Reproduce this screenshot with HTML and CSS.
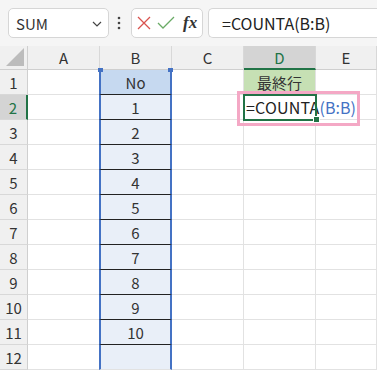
FILE: index.html
```html
<!DOCTYPE html>
<html lang="ja">
  <head>
    <meta charset="UTF-8" />
    <title>COUNTA</title>
    <link rel="stylesheet" href="styles.css">
  </head>
  <body>
    <div class="toolbar">
      <div class="namebox">
        <span>SUM</span>
        <svg class="chev" width="10" height="6" viewBox="0 0 10 6"><polyline points="1,1 5,5 9,1" fill="none" stroke="#444" stroke-width="1.2"/></svg>
      </div>
      <svg class="grip" width="4" height="14" viewBox="0 0 4 14"><circle cx="2" cy="2" r="1.3" fill="#444"/><circle cx="2" cy="7" r="1.3" fill="#444"/><circle cx="2" cy="12" r="1.3" fill="#444"/></svg>
      <div class="fxbox">
        <svg width="14" height="14" viewBox="0 0 14 14"><path d="M1 1 L13 13 M13 1 L1 13" stroke="#d9534f" stroke-width="1.3"/></svg>
        <svg width="18" height="14" viewBox="0 0 18 14"><polyline points="1,7 6,12 17,1" fill="none" stroke="#6aab66" stroke-width="1.3"/></svg>
        <span class="fx">fx</span>
      </div>
      <div class="formula">=COUNTA(B:B)</div>
    </div>

    <div class="sheet">
      <div class="corner"><span class="tri"></span></div>
      <div class="colhead">A</div>
      <div class="colhead">B</div>
      <div class="colhead">C</div>
      <div class="colhead sel">D</div>
      <div class="colhead">E</div>

      <div class="rowhead">1</div>
      <div class="cell"></div>
      <div class="cell b title">No<i class="hl"></i><i class="hr"></i></div>
      <div class="cell"></div>
      <div class="cell green">最終行</div>
      <div class="cell"></div>

      <div class="rowhead sel">2</div>
      <div class="cell"></div>
      <div class="cell b line">1</div>
      <div class="cell"></div>
      <div class="cell active">=COUNTA<span class="ref">(B:B)</span></div>
      <div class="cell"></div>

      <div class="rowhead">3</div><div class="cell"></div><div class="cell b line">2</div><div class="cell"></div><div class="cell"></div><div class="cell"></div>
      <div class="rowhead">4</div><div class="cell"></div><div class="cell b line">3</div><div class="cell"></div><div class="cell"></div><div class="cell"></div>
      <div class="rowhead">5</div><div class="cell"></div><div class="cell b line">4</div><div class="cell"></div><div class="cell"></div><div class="cell"></div>
      <div class="rowhead">6</div><div class="cell"></div><div class="cell b line">5</div><div class="cell"></div><div class="cell"></div><div class="cell"></div>
      <div class="rowhead">7</div><div class="cell"></div><div class="cell b line">6</div><div class="cell"></div><div class="cell"></div><div class="cell"></div>
      <div class="rowhead">8</div><div class="cell"></div><div class="cell b line">7</div><div class="cell"></div><div class="cell"></div><div class="cell"></div>
      <div class="rowhead">9</div><div class="cell"></div><div class="cell b line">8</div><div class="cell"></div><div class="cell"></div><div class="cell"></div>
      <div class="rowhead">10</div><div class="cell"></div><div class="cell b line">9</div><div class="cell"></div><div class="cell"></div><div class="cell"></div>
      <div class="rowhead">11</div><div class="cell"></div><div class="cell b line">10</div><div class="cell"></div><div class="cell"></div><div class="cell"></div>
      <div class="rowhead">12</div><div class="cell"></div><div class="cell b"></div><div class="cell"></div><div class="cell"></div><div class="cell"></div>

      <div class="mark"></div>
    </div>
  </body>
</html>
```

FILE: styles.css
```css
body {
  margin: 0;
  background: #ffffff;
  font-family: "Noto Sans CJK JP", "Noto Sans", sans-serif;
  color: #222;
  overflow: hidden;
}
.toolbar {
  display: flex;
  align-items: center;
  height: 46px;
  padding-left: 8px;
  background: #f5f5f5;
  box-sizing: border-box;
}
.namebox {
  width: 101px;
  height: 30px;
  box-sizing: border-box;
  border: 1px solid #d6d6d6;
  border-radius: 5px;
  background: #fff;
  display: flex;
  align-items: center;
  justify-content: space-between;
  padding: 0 6px 0 7px;
  font-size: 15px;
  color: #333;
}
.chev {
  margin-top: 2px;
}
.grip {
  margin: 0 10px 0 8px;
}
.fxbox {
  width: 72px;
  height: 30px;
  box-sizing: border-box;
  border: 1px solid #d6d6d6;
  border-radius: 5px;
  background: #fff;
  display: flex;
  align-items: center;
  gap: 6px;
  padding-left: 5px;
}
.fx {
  font-family: "Liberation Serif", serif;
  font-style: italic;
  font-weight: bold;
  font-size: 17px;
  color: #333;
  margin-left: 2px;
}
.formula {
  flex: 1;
  height: 30px;
  margin-left: 5px;
  box-sizing: border-box;
  border: 1px solid #d6d6d6;
  border-right: none;
  border-radius: 5px 0 0 5px;
  background: #fff;
  display: flex;
  align-items: center;
  padding-left: 13px;
  font-size: 16px;
  color: #222;
}

.sheet {
  position: relative;
  display: grid;
  grid-template-columns: 28px 72px 72px 72px 72px 1fr;
  grid-template-rows: 24px repeat(12, 25px);
  font-size: 15px;
}
.corner,
.colhead,
.rowhead {
  background: #f0f0f0;
  color: #333;
  box-sizing: border-box;
  display: flex;
  align-items: center;
  justify-content: center;
}
.corner {
  position: relative;
  border-right: 1px solid #cfcfcf;
  border-bottom: 1px solid #cfcfcf;
}
.tri {
  position: absolute;
  right: 3px;
  bottom: 3px;
  width: 0;
  height: 0;
  border-left: 18px solid transparent;
  border-bottom: 18px solid #bcbcbc;
}
.colhead {
  border-right: 1px solid #d8d8d8;
  border-bottom: 1px solid #cfcfcf;
}
.colhead.sel {
  background: #d4d4d4;
  color: #217346;
  border-bottom: 2px solid #217346;
}
.rowhead {
  border-right: 1px solid #cfcfcf;
  border-bottom: 1px solid #d8d8d8;
}
.rowhead.sel {
  background: #d4d4d4;
  color: #217346;
  border-right: 2px solid #217346;
}
.cell {
  box-sizing: border-box;
  border-right: 1px solid #e2e2e2;
  border-bottom: 1px solid #e2e2e2;
  display: flex;
  align-items: center;
  justify-content: center;
  white-space: nowrap;
}
.cell.b {
  position: relative;
  background: #e9eff8;
  border-left: 2px solid #4472c4;
  border-right: 2px solid #4472c4;
  margin-left: -1px;
  color: #333;
}
.cell.title {
  background: #c6d9f0;
  border-bottom: 1px solid #222;
}
.cell.line {
  border-bottom: 1px solid #222;
}
.hl,
.hr {
  position: absolute;
  top: -2px;
  width: 5px;
  height: 4px;
  background: #4472c4;
}
.hl {
  left: -3px;
}
.hr {
  right: -3px;
}
.cell.green {
  background: #c6e0b4;
  color: #333;
}
.cell.active {
  position: relative;
  z-index: 1;
  justify-content: flex-start;
  padding-left: 2px;
  font-size: 16px;
  letter-spacing: 0.2px;
  outline: 2px solid #217346;
  outline-offset: -1px;
  border-right: none;
  overflow: visible;
}
.cell.active::after {
  content: "";
  position: absolute;
  right: -4px;
  bottom: -4px;
  width: 5px;
  height: 5px;
  background: #217346;
  border: 1px solid #fff;
}
.ref {
  color: #4472c4;
  letter-spacing: 0;
}
.mark {
  position: absolute;
  left: 237px;
  top: 45px;
  width: 123px;
  height: 35px;
  box-sizing: border-box;
  border: 3px solid #f4a8c5;
  z-index: 2;
}
```
